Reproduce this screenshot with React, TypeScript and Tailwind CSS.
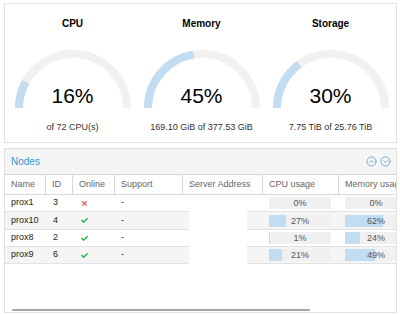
import { CircleChevronUp, CircleChevronDown } from 'lucide-react';
import { FaCheck, FaTimes } from 'react-icons/fa';

const gauges = [
  { title: 'CPU', pct: 16, sub: 'of 72 CPU(s)' },
  { title: 'Memory', pct: 45, sub: '169.10 GiB of 377.53 GiB' },
  { title: 'Storage', pct: 30, sub: '7.75 TiB of 25.76 TiB' },
];

const columns = [
  { label: 'Name', w: 'w-[41px]' },
  { label: 'ID', w: 'w-[27px]' },
  { label: 'Online', w: 'w-[42px]' },
  { label: 'Support', w: 'w-[68px]' },
  { label: 'Server Address', w: 'w-[80px]' },
  { label: 'CPU usage', w: 'w-[76px]' },
  { label: 'Memory usage', w: 'w-[76px]' },
];

const nodes = [
  { name: 'prox1', id: 3, online: false, cpu: 0, mem: 0 },
  { name: 'prox10', id: 4, online: true, cpu: 27, mem: 62 },
  { name: 'prox8', id: 2, online: true, cpu: 1, mem: 24 },
  { name: 'prox9', id: 6, online: true, cpu: 21, mem: 49 },
];

const rowHeights = ['h-[17px]', 'h-[18px]', 'h-[17px]', 'h-[17px]'];

function Gauge({ title, pct, sub }: { title: string; pct: number; sub: string }) {
  const a = (Math.PI * pct) / 100;
  const x = 58 - 54 * Math.cos(a);
  const y = 58 - 54 * Math.sin(a);
  return (
    <div className="flex flex-col items-center">
      <div className="text-[10px] leading-[12px] font-bold text-black">{title}</div>
      <div className="relative mt-[20px] w-[116px] h-[58px]">
        <svg width="116" height="58" className="block">
          <path d="M 4 58 A 54 54 0 0 1 112 58" stroke="#f1f1f1" strokeWidth="8" fill="none" />
          <path d={`M 4 58 A 54 54 0 0 1 ${x} ${y}`} stroke="#c2dcf2" strokeWidth="8" fill="none" />
        </svg>
        <div className="absolute inset-x-0 bottom-0 text-center text-[21px] leading-[24px] text-black">
          {pct}%
        </div>
      </div>
      <div className="mt-[14px] text-[9px] leading-[11px] text-[#333] whitespace-nowrap">{sub}</div>
    </div>
  );
}

function Bar({ pct }: { pct: number }) {
  return (
    <div className="relative w-[62px] h-[12px] bg-[#f0f0f0]">
      <div className="h-full bg-[#c2dcf2]" style={{ width: `${pct}%` }} />
      <div className="absolute inset-0 text-center text-[9px] leading-[12px] text-[#555]">{pct}%</div>
    </div>
  );
}

export default function App() {
  return (
    <div className="w-[400px] h-[314px] bg-white pt-[3px] pl-[4px] font-['Liberation_Sans',Arial,sans-serif] overflow-hidden">
      {/* resource gauges */}
      <div className="w-[393px] border border-[#e2e2e2] pt-[14px] pb-[9px] pl-[3px]">
        <div className="grid grid-cols-3 w-[387px]">
          {gauges.map((g) => (
            <Gauge key={g.title} {...g} />
          ))}
        </div>
      </div>

      {/* nodes grid */}
      <div className="mt-[5px] w-[393px] h-[165px] border border-[#e0e0e0] flex flex-col overflow-hidden">
        <div className="h-[25px] shrink-0 bg-[#f5f5f5] flex items-center pl-[6px] pr-[5px]">
          <span className="text-[10px] text-[#3892d4]">Nodes</span>
          <div className="ml-auto flex items-center gap-[3px] text-[#3892d4]">
            <CircleChevronUp size={11} strokeWidth={1.5} />
            <CircleChevronDown size={11} strokeWidth={1.5} />
          </div>
        </div>

        <div className="flex h-[21px] shrink-0 border-y border-[#d9d9d9] bg-white">
          {columns.map((c) => (
            <div
              key={c.label}
              className={`${c.w} shrink-0 border-r border-[#d9d9d9] pl-[6px] flex items-center text-[9px] text-[#666] whitespace-nowrap`}
            >
              {c.label}
            </div>
          ))}
        </div>

        {nodes.map((n, i) => {
          const cell = i % 2 === 1 ? 'bg-[#f5f5f5] border-b border-[#e2e2e2]' : 'bg-white border-b border-[#e2e2e2]';
          return (
            <div key={n.name} className={`flex shrink-0 ${rowHeights[i]} text-[9px] text-[#222]`}>
              <div className={`w-[41px] shrink-0 pl-[6px] flex items-center ${cell}`}>{n.name}</div>
              <div className={`w-[27px] shrink-0 pl-[7px] flex items-center ${cell}`}>{n.id}</div>
              <div className={`w-[42px] shrink-0 pl-[8px] flex items-center ${cell}`}>
                {n.online ? (
                  <FaCheck size={7} className="text-[#21b84a]" />
                ) : (
                  <FaTimes size={7} className="text-[#f05a5a]" />
                )}
              </div>
              <div className={`w-[68px] shrink-0 pl-[6px] flex items-center ${cell}`}>-</div>
              <div className="w-[80px] shrink-0 flex">
                <div className={`w-[6px] ${cell}`} />
                <div className="w-[58px] bg-white" />
                <div className={`w-[16px] ${cell}`} />
              </div>
              <div className={`w-[76px] shrink-0 pl-[6px] flex items-center ${cell}`}>
                <Bar pct={n.cpu} />
              </div>
              <div className={`w-[76px] shrink-0 pl-[6px] flex items-center ${cell}`}>
                <Bar pct={n.mem} />
              </div>
            </div>
          );
        })}

        <div className="flex-1 flex flex-col">
          <div className="mt-auto mb-[1px] ml-[7px] w-[298px] h-[2px] bg-[#a6a6a6] rounded-full" />
        </div>
      </div>
    </div>
  );
}
